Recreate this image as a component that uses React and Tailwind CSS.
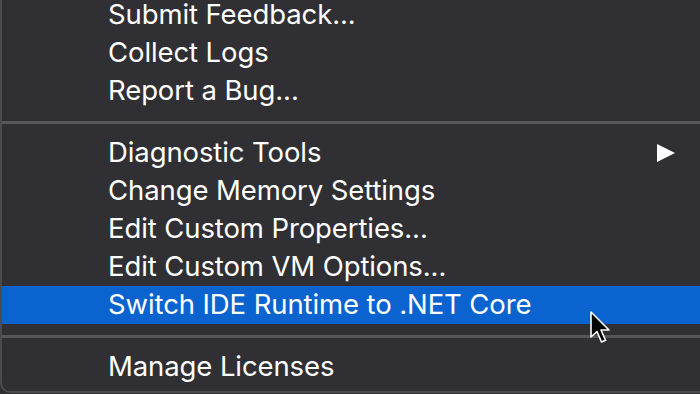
const groups = [
  ["Submit Feedback...", "Collect Logs", "Report a Bug..."],
  [
    "Diagnostic Tools",
    "Change Memory Settings",
    "Edit Custom Properties...",
    "Edit Custom VM Options...",
    "Switch IDE Runtime to .NET Core",
  ],
  ["Manage Licenses"],
];

function Item({ label, active, submenu }) {
  return (
    <div
      className={
        "relative flex h-[38px] items-center pl-[106px] pr-[25px] " +
        (active ? "bg-[#0b63d0]" : "")
      }
    >
      <span className="flex-1 text-[27.5px] leading-none tracking-[-0.1px] text-white">{label}</span>
      {submenu && (
        <svg width="18" height="18" viewBox="0 0 18 18" className="shrink-0">
          <path d="M0 0 L18 9 L0 18 Z" fill="#ffffff" />
        </svg>
      )}
      {active && (
        <svg
          width="24"
          height="36"
          viewBox="0 0 24 36"
          className="absolute left-[587px] top-[25px]"
        >
          <path
            d="M2 1 L2 26 L8 20.5 L12.5 31 L16.5 29.3 L12 19 L20 19 Z"
            fill="#000000"
            stroke="#ffffff"
            strokeWidth="1.6"
            strokeLinejoin="round"
          />
        </svg>
      )}
    </div>
  );
}

export default function App() {
  return (
    <div
      className="h-[394px] w-[700px] overflow-hidden bg-[#2f2f33]"
      style={{ fontFamily: "Inter, 'Liberation Sans', sans-serif" }}
    >
      <div className="-mt-[4px] h-[397px] rounded-bl-[10px] border-b-2 border-l-2 border-[#4b4b4f] bg-[#303034]">
        {groups.map((g, gi) => (
          <div key={gi}>
            {gi > 0 && (
              <div className="flex h-[24px] items-center">
                <div className="h-[3px] w-full bg-[#57575b]" />
              </div>
            )}
            {g.map((label) => (
              <Item
                key={label}
                label={label}
                submenu={label === "Diagnostic Tools"}
                active={label.startsWith("Switch")}
              />
            ))}
          </div>
        ))}
      </div>
    </div>
  );
}
